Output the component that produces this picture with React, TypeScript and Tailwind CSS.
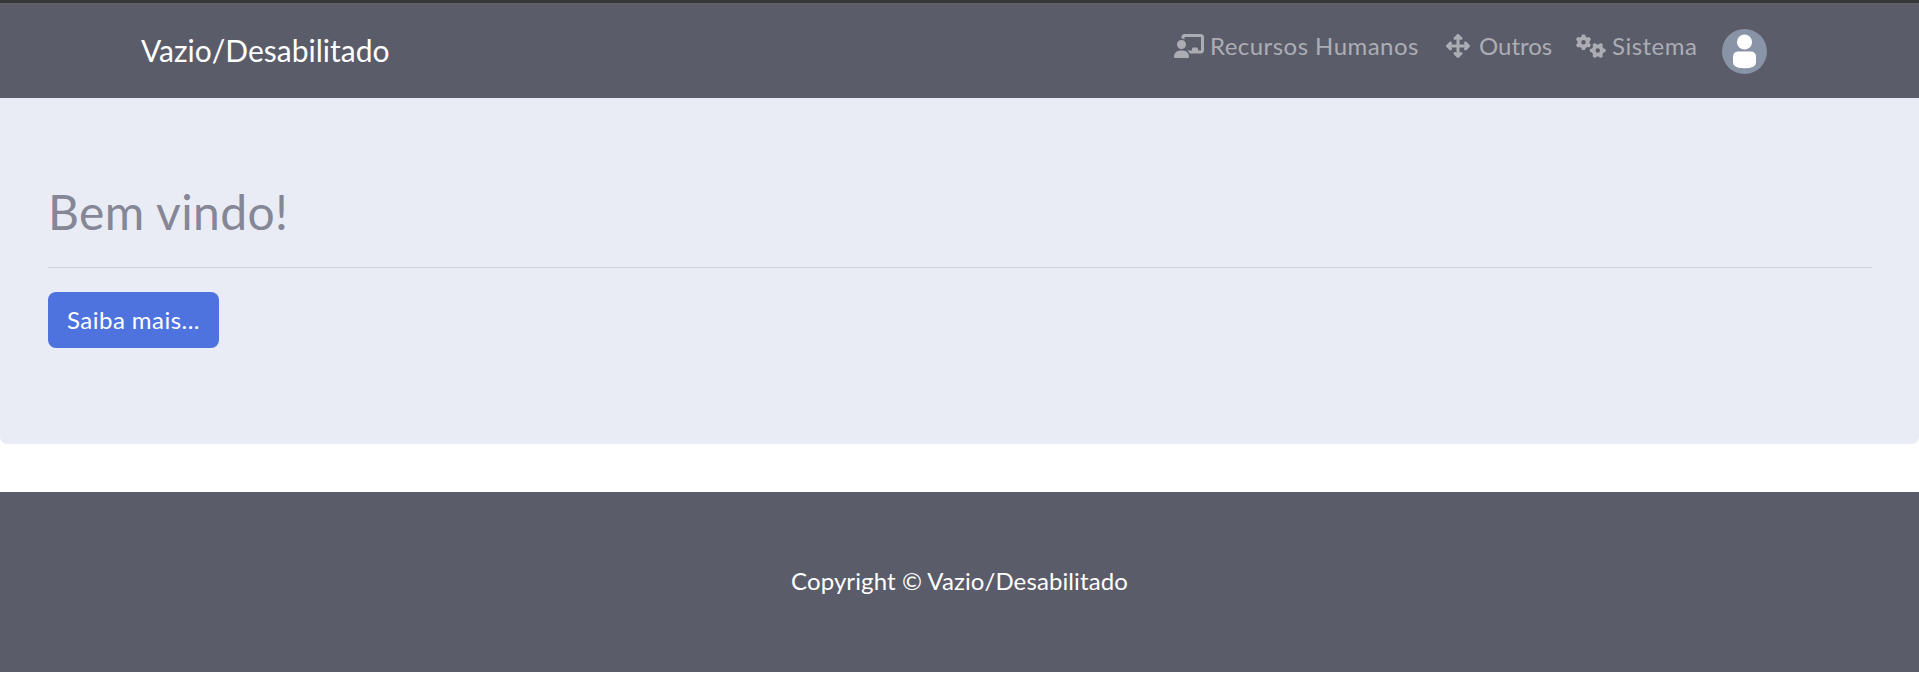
import { FaArrowsUpDownLeftRight, FaChalkboardUser, FaGears } from "react-icons/fa6";

function Avatar() {
  return (
    <svg viewBox="0 0 45 45" className="h-[45px] w-[45px]">
      <circle cx="22.5" cy="22.5" r="22.5" fill="#8a94a7" />
      <circle cx="22.5" cy="13" r="7.6" fill="#fff" />
      <path
        d="M16.5 22.5H28.5Q34 22.5 34 28V33.5Q34 39.3 22.5 39.3Q11 39.3 11 33.5V28Q11 22.5 16.5 22.5Z"
        fill="#fff"
      />
    </svg>
  );
}

export default function App() {
  return (
    <div className="min-h-[676px] bg-white font-['Lato','Noto_Sans',sans-serif] text-[24px] leading-[36px]">
      <header className="h-[98px] border-t-[3px] border-[#343639] bg-[#5a5c69]">
        <div className="flex h-full items-start border-t border-[#606060] pr-[152px] pl-[141px]">
          <span className="mt-[27px] text-[30px] leading-[38px] whitespace-nowrap text-white">
            Vazio/Desabilitado
          </span>
          <nav className="ml-auto flex items-start text-[#acadb4]">
            <a className="mt-[24px] flex w-[245px] items-center whitespace-nowrap tracking-[0.46px]">
              <FaChalkboardUser className="mr-[6px] h-[24px] w-[30px] shrink-0" />
              Recursos Humanos
            </a>
            <a className="mt-[24px] ml-[27px] flex w-[107px] items-center whitespace-nowrap">
              <FaArrowsUpDownLeftRight className="mr-[9px] h-[24px] w-[24px] shrink-0" />
              Outros
            </a>
            <a className="mt-[24px] ml-[23px] flex w-[122px] items-center whitespace-nowrap tracking-[0.5px]">
              <FaGears className="mr-[6px] h-[24px] w-[30px] shrink-0" />
              Sistema
            </a>
            <a className="mt-[25px] ml-[24px]">
              <Avatar />
            </a>
          </nav>
        </div>
      </header>
      <main className="mb-[48px] h-[346px] rounded-b-[7px] bg-[#e9ecf4] pt-[84px] pr-[47px] pl-12">
        <h1 className="h-[61px] text-[48px] leading-[60px] tracking-[0.35px] text-[#858796]">
          Bem vindo!
        </h1>
        <hr className="mt-[24px] border-[#d0d3df]" />
        <button className="mt-[24px] flex h-[56px] w-[171px] items-center justify-center rounded-[8px] bg-[#4e73df] pb-px tracking-[0.46px] text-white">
          Saiba mais...
        </button>
      </main>
      <footer className="flex h-[180px] items-center justify-center bg-[#5a5c69] pb-[2px] tracking-[0.1px] text-white">
        Copyright © Vazio/Desabilitado
      </footer>
    </div>
  );
}
